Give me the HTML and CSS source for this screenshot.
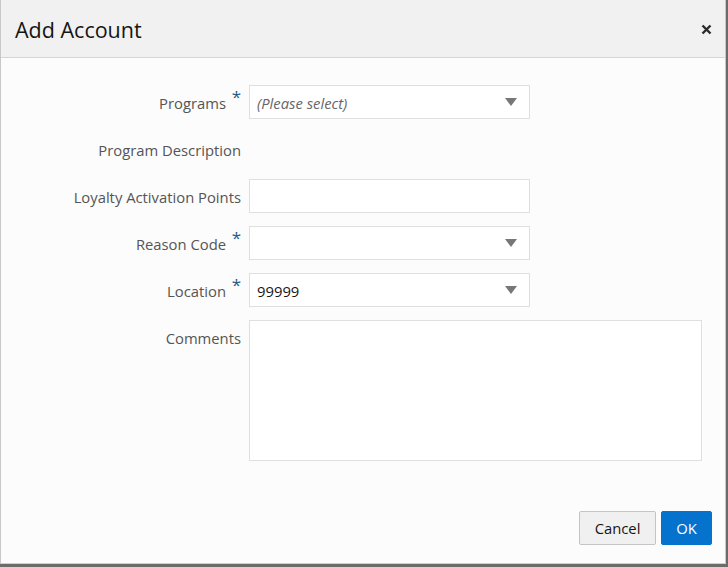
FILE: index.html
```html
<!DOCTYPE html>
<html>
<head>
<meta charset="utf-8">
<link rel="stylesheet" href="styles.css">
</head>
<body>
<div class="dialog">
  <div class="header">
    <h1 class="title">Add Account</h1>
    <button class="close" aria-label="Close">
      <svg width="11" height="11" viewBox="0 0 11 11"><path d="M1.5 1.5 L9.5 9.5 M9.5 1.5 L1.5 9.5" stroke="#2b2b2b" stroke-width="2.4" stroke-linecap="butt"/></svg>
    </button>
  </div>
  <div class="body">
    <div class="form">
      <div class="label">Programs<span class="req">*</span></div>
      <div class="select"><span class="placeholder">(Please select)</span><span class="arrow"></span></div>

      <div class="label plain">Program Description</div>
      <div class="empty"></div>

      <div class="label plain">Loyalty Activation Points</div>
      <div class="input"></div>

      <div class="label">Reason Code<span class="req">*</span></div>
      <div class="select"><span class="value"></span><span class="arrow"></span></div>

      <div class="label">Location<span class="req">*</span></div>
      <div class="select"><span class="value">99999</span><span class="arrow"></span></div>

      <div class="label plain top">Comments</div>
      <div class="textarea"></div>
    </div>
  </div>
  <div class="footer">
    <button class="btn cancel">Cancel</button>
    <button class="btn ok">OK</button>
  </div>
</div>
</body>
</html>
```

FILE: styles.css
```css
html, body {
  margin: 0;
  padding: 0;
  background: #6b6b6b;
  font-family: "Open Sans", "Noto Sans", sans-serif;
}
.dialog {
  width: 726px;
  height: 564px;
  border-left: 1px solid #c8c8c8;
  border-right: 1px solid #c8c8c8;
  border-bottom: 1px solid #d0d0d0;
  background: #fcfcfc;
  display: flex;
  flex-direction: column;
  box-sizing: border-box;
}
.header {
  height: 58px;
  background: #f1f1f1;
  border-bottom: 1px solid #d6d6d6;
  display: flex;
  align-items: center;
  justify-content: space-between;
  padding: 0 13px 0 14px;
  box-sizing: border-box;
  flex-shrink: 0;
}
.title {
  margin: 0;
  font-weight: 400;
  font-size: 21.5px;
  color: #161513;
  line-height: 1;
  padding-top: 2px;
}
.close {
  border: 0;
  background: none;
  padding: 0;
  width: 11px;
  height: 11px;
  display: flex;
  margin-top: 2px;
}
.body {
  flex: 1;
  padding-top: 27px;
}
.form {
  display: grid;
  grid-template-columns: 240px 453px;
  grid-template-rows: 34px 34px 34px 34px 34px 141px;
  column-gap: 8px;
  row-gap: 13px;
}
.label {
  display: flex;
  align-items: center;
  justify-content: flex-end;
  font-size: 14.8px;
  color: #555;
  white-space: nowrap;
  padding-top: 1px;
}
.label.top { align-items: flex-start; padding-top: 8px; }
.req {
  color: #1f5a8c;
  font-size: 17px;
  width: 15px;
  text-align: right;
  align-self: flex-start;
  margin-top: 2px;
  line-height: 1;
}
.select, .input {
  width: 281px;
  box-sizing: border-box;
  border: 1px solid #dfdfdf;
  background: #fff;
  display: flex;
  align-items: center;
  padding: 1px 12px 0 7px;
  font-size: 14.8px;
}
.placeholder {
  font-style: italic;
  color: #666;
  flex: 1;
}
.value {
  color: #161513;
  flex: 1;
}
.arrow {
  width: 0;
  height: 0;
  border-left: 6px solid transparent;
  border-right: 6px solid transparent;
  border-top: 8px solid #777;
  margin-top: -1px;
}
.textarea {
  width: 453px;
  box-sizing: border-box;
  border: 1px solid #dfdfdf;
  background: #fff;
}
.footer {
  display: flex;
  justify-content: flex-end;
  gap: 5px;
  padding: 0 13px 18px 0;
}
.btn {
  height: 34px;
  font-family: inherit;
  font-size: 14.8px;
  border-radius: 2px;
  padding: 0;
  cursor: pointer;
}
.cancel {
  width: 77px;
  background: #f0f0f0;
  border: 1px solid #c4c4c4;
  color: #161513;
}
.ok {
  width: 51px;
  background: #0572ce;
  border: 1px solid #0572ce;
  color: #fff;
}
```
